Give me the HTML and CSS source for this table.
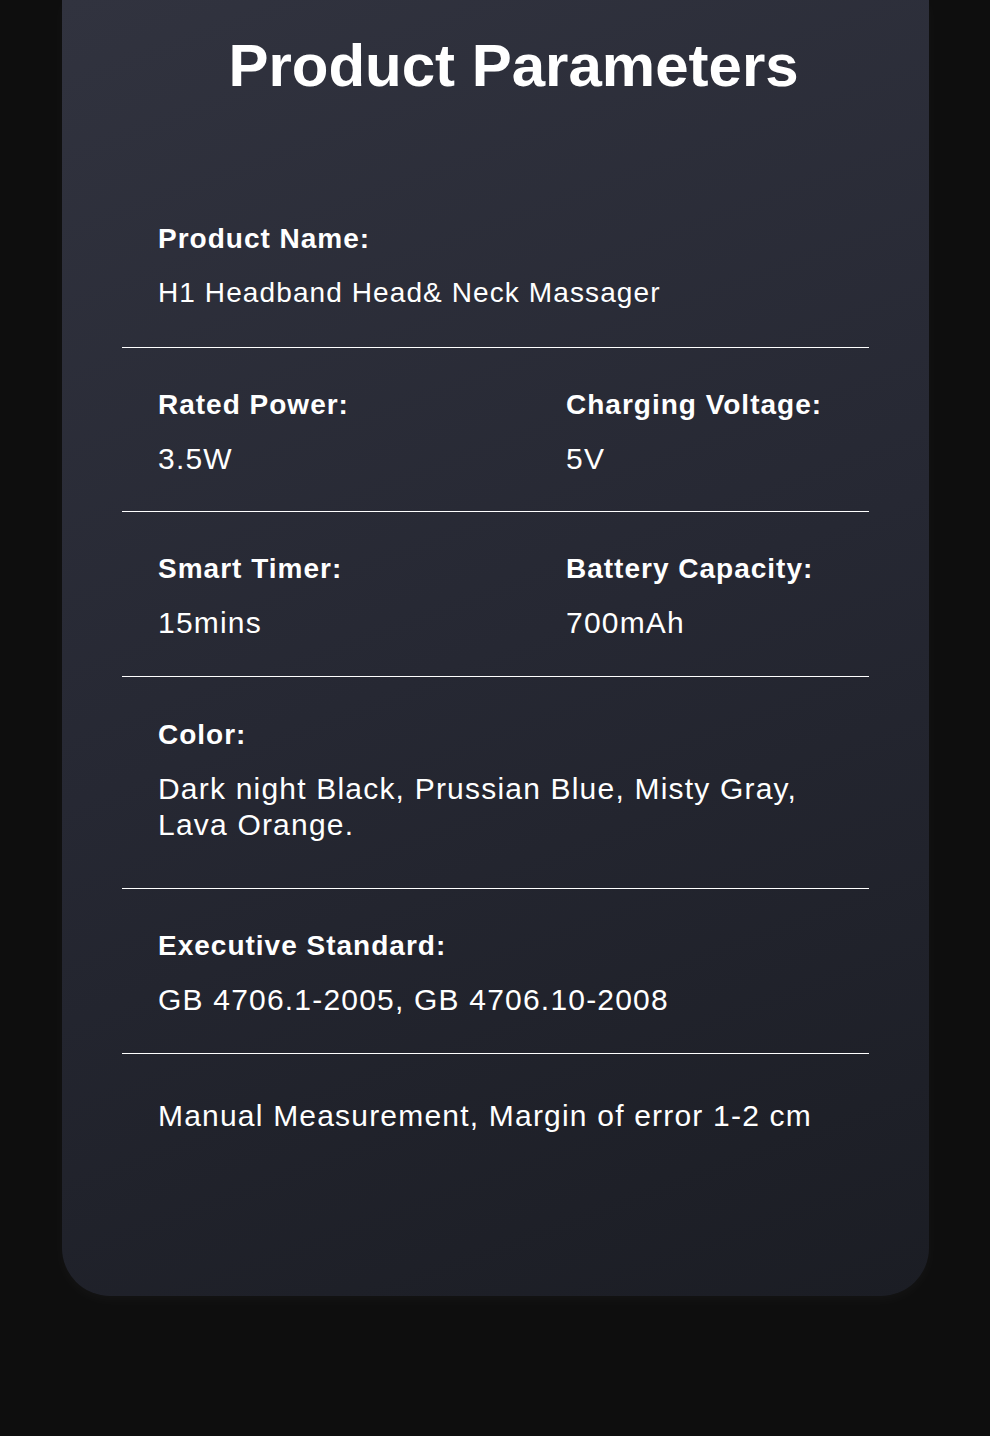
FILE: index.html
```html
<!DOCTYPE html>
<html lang="en">
<head>
<meta charset="utf-8">
<title>Product Parameters</title>
<link rel="stylesheet" href="styles.css">
</head>
<body>
<main class="card">
  <h1 class="title">Product Parameters</h1>
  <section class="row row-first">
    <div class="item">
      <div class="label">Product Name:</div>
      <div class="value value-name">H1 Headband Head&amp; Neck Massager</div>
    </div>
  </section>
  <section class="row two row-tight">
    <div class="item">
      <div class="label">Rated Power:</div>
      <div class="value">3.5W</div>
    </div>
    <div class="item">
      <div class="label">Charging Voltage:</div>
      <div class="value">5V</div>
    </div>
  </section>
  <section class="row two">
    <div class="item">
      <div class="label">Smart Timer:</div>
      <div class="value">15mins</div>
    </div>
    <div class="item">
      <div class="label">Battery Capacity:</div>
      <div class="value">700mAh</div>
    </div>
  </section>
  <section class="row row-color">
    <div class="item">
      <div class="label">Color:</div>
      <div class="value">Dark night Black, Prussian Blue, Misty Gray,<br>Lava Orange.</div>
    </div>
  </section>
  <section class="row">
    <div class="item">
      <div class="label">Executive Standard:</div>
      <div class="value">GB 4706.1-2005, GB 4706.10-2008</div>
    </div>
  </section>
  <section class="row row-last">
    <div class="item">
      <div class="value">Manual Measurement, Margin of error 1-2 cm</div>
    </div>
  </section>
</main>
</body>
</html>
```

FILE: styles.css
```css
html, body {
  margin: 0;
  padding: 0;
}
body {
  background: #0e0e0e;
  font-family: "Liberation Sans", Arial, sans-serif;
  color: #ffffff;
  width: 990px;
  height: 1436px;
  overflow: hidden;
}
.card {
  margin: 0 61px 0 62px;
  padding: 31px 60px 162px;
  background: linear-gradient(160deg, #31333f 0%, #262833 50%, #1b1d24 100%);
  border-radius: 0 0 48px 48px;
  box-shadow: 0 4px 14px rgba(255, 255, 255, 0.03);
}
.title {
  margin: 0 0 83px;
  padding-left: 36px;
  font-size: 60px;
  line-height: 69px;
  font-weight: 700;
  text-align: center;
  letter-spacing: 0;
}
.row {
  padding: 39px 0 35px 36px;
  border-top: 1px solid #ffffff;
  display: grid;
  grid-template-columns: 1fr;
}
.row.two {
  grid-template-columns: 408px 1fr;
}
.row-first {
  border-top: none;
  padding-top: 38px;
  padding-bottom: 36px;
}
.row-tight {
  padding-bottom: 34px;
}
.row-color {
  padding-top: 40px;
  padding-bottom: 45px;
}
.row-last {
  padding-top: 44px;
  padding-bottom: 0;
}
.label {
  font-size: 28px;
  line-height: 36px;
  font-weight: 700;
  letter-spacing: 1px;
  margin-bottom: 18px;
}
.value {
  font-size: 30px;
  line-height: 36px;
  letter-spacing: 1.2px;
}
.value-name {
  font-size: 28px;
  letter-spacing: 1.1px;
}
```
